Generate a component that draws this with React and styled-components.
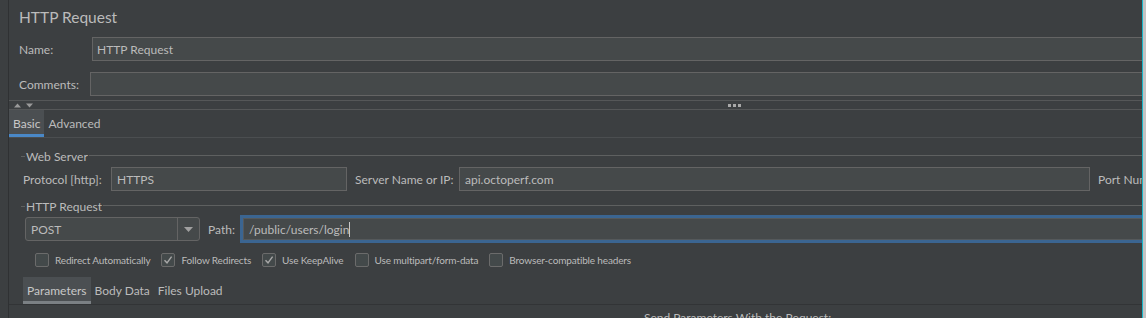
import React from "react";
import styled, { createGlobalStyle } from "styled-components";

const GlobalStyle = createGlobalStyle`
  body {
    margin: 0;
    background: #3c3f41;
    font-family: Lato, "Liberation Sans", sans-serif;
    color: #bbbbbb;
  }
`;

const Frame = styled.div`
  display: flex;
  width: 1146px;
  height: 318px;
  overflow: hidden;
  background: #3c3f41;
`;

const Gutter = styled.div`
  width: 8px;
  border-right: 1px solid #2f3133;
`;

const Main = styled.div`
  flex: 1;
  min-width: 0;
  overflow: hidden;
  display: flex;
  flex-direction: column;

  & > * {
    flex: none;
  }
`;

const RightEdge = styled.div`
  width: 3px;
  border-left: 1px solid #19b6c9;
  background: #c3c3c3;
`;

const Title = styled.div`
  height: 34px;
  line-height: 34px;
  padding-left: 10px;
  font-size: 15.5px;
  color: #bbbbbb;
`;

const FormRow = styled.div`
  display: flex;
  align-items: center;
  height: 24px;
  padding-left: 10px;
  margin-top: ${(p) => p.$top || 0}px;
`;

const Label = styled.span`
  flex: none;
  width: ${(p) => (p.$width ? `${p.$width}px` : "auto")};
  font-size: 12px;
  white-space: nowrap;
  color: #bbbbbb;
`;

const TextInput = styled.div`
  flex: ${(p) => (p.$width ? "none" : "1")};
  width: ${(p) => (p.$width ? `${p.$width}px` : "auto")};
  height: 24px;
  box-sizing: border-box;
  margin-right: ${(p) => (p.$width ? 0 : -20)}px;
  background: #45494a;
  border: 1px solid #646464;
  display: flex;
  align-items: center;
  padding-left: ${(p) => p.$pad || 5}px;
  font-size: 12px;
  color: #bbbbbb;
  white-space: nowrap;
`;

const Splitter = styled.div`
  margin-top: 4px;
  height: 8px;
  border-top: 1px solid #555758;
  border-bottom: 1px solid #555758;
  display: flex;
  align-items: center;
`;

const Arrows = styled.div`
  display: flex;
  gap: 5px;
  padding-left: 5px;
`;

const Dots = styled.div`
  display: flex;
  gap: 2px;
  margin-left: 695px;
  span {
    width: 3px;
    height: 3px;
    background: #a9a9a9;
  }
`;

const TabBar = styled.div`
  display: flex;
  height: 27px;
  padding-left: ${(p) => p.$indent || 0}px;
  border-bottom: 1px solid ${(p) => p.$line || "#4b4e50"};
  margin-top: ${(p) => p.$top || 0}px;
`;

const Tab = styled.div`
  display: flex;
  align-items: center;
  padding: 0 4px;
  box-sizing: border-box;
  font-size: 12px;
  color: ${(p) => (p.$active ? "#c8c8c8" : "#bbbbbb")};
  background: ${(p) => (p.$active ? "#4b4f52" : "transparent")};
  border-bottom: 3px solid
    ${(p) => (p.$active ? p.$accent : "transparent")};
  padding-top: 3px;
`;

const Group = styled.div`
  padding-left: 12px;
  margin-top: ${(p) => p.$top || 0}px;
`;

const GroupHeader = styled.div`
  display: flex;
  align-items: center;
  height: 14px;
  &::before {
    content: "";
    width: 4px;
    height: 1px;
    background: #5e6060;
  }
  &::after {
    content: "";
    flex: 1;
    height: 1px;
    background: #5e6060;
    margin-top: -1px;
  }
`;

const GroupTitle = styled.span`
  font-size: 12px;
  padding: 0 1px;
  color: #bbbbbb;
`;

const FieldRow = styled.div`
  display: flex;
  align-items: center;
  height: ${(p) => p.$height || 24}px;
  padding-left: ${(p) => p.$indent || 0}px;
  margin-top: ${(p) => p.$top || 0}px;
  gap: 8px;
  white-space: nowrap;
`;

const Combo = styled.div`
  flex: none;
  width: 175px;
  height: 24px;
  box-sizing: border-box;
  display: flex;
  background: #45494a;
  border: 1px solid #646464;
  border-radius: 3px;
  font-size: 12px;
`;

const ComboValue = styled.div`
  flex: 1;
  display: flex;
  align-items: center;
  padding-left: 5px;
`;

const ComboButton = styled.div`
  width: 21px;
  border-left: 1px solid #646464;
  display: flex;
  align-items: center;
  justify-content: center;
`;

const FocusInput = styled.div`
  flex: 1;
  height: 28px;
  box-sizing: border-box;
  margin-right: -20px;
  background: #45494a;
  border: 3px solid #3b6591;
  box-shadow: inset 0 0 0 1px #55595b;
  display: flex;
  align-items: center;
  padding-left: 6px;
  font-size: 12px;
  color: #bbbbbb;
`;

const Caret = styled.span`
  width: 1px;
  height: 15px;
  background: #c8c8c8;
`;

const CheckRow = styled.div`
  display: flex;
  align-items: center;
  height: 14px;
  padding-left: 14px;
  margin-top: 10px;
  gap: 11px;
`;

const CheckItem = styled.label`
  display: flex;
  align-items: center;
  gap: 6px;
  font-size: 10px;
  letter-spacing: -0.15px;
  color: #bbbbbb;
  white-space: nowrap;
`;

const Box = styled.span`
  width: 14px;
  height: 14px;
  box-sizing: border-box;
  border: 1px solid #6b6b6b;
  border-radius: 2px;
  background: #43494a;
  display: flex;
  align-items: center;
  justify-content: center;
`;

const Footer = styled.div`
  margin-top: 5px;
  padding-left: 635px;
  font-size: 12px;
  line-height: 15px;
  white-space: nowrap;
  color: #bbbbbb;
`;

const Check = ({ checked, children }) => (
  <CheckItem>
    <Box>
      {checked && (
        <svg width="10" height="10" viewBox="0 0 10 10">
          <path d="M1.5 5.2 L4 7.8 L8.6 1.6" fill="none" stroke="#a8a8a8" strokeWidth="1.4" />
        </svg>
      )}
    </Box>
    {children}
  </CheckItem>
);

export default function App() {
  return (
    <>
      <GlobalStyle />
      <Frame>
        <Gutter />
        <Main>
          <Title>HTTP Request</Title>

          <FormRow $top={3}>
            <Label $width={73}>Name:</Label>
            <TextInput $pad={4}>HTTP Request</TextInput>
          </FormRow>
          <FormRow $top={11}>
            <Label $width={71}>Comments:</Label>
            <TextInput />
          </FormRow>

          <Splitter>
            <Arrows>
              <svg width="7" height="5" viewBox="0 0 7 5">
                <path d="M0 4.5 L3.5 0.5 L7 4.5 Z" fill="#9a9a9a" />
              </svg>
              <svg width="7" height="5" viewBox="0 0 7 5">
                <path d="M0 0.5 L3.5 4.5 L7 0.5 Z" fill="#9a9a9a" />
              </svg>
            </Arrows>
            <Dots>
              <span />
              <span />
              <span />
            </Dots>
          </Splitter>

          <TabBar $line="#4b4e50">
            <Tab $active $accent="#4a88c7">Basic</Tab>
            <Tab>Advanced</Tab>
          </TabBar>

          <Group $top={11}>
            <GroupHeader>
              <GroupTitle>Web Server</GroupTitle>
            </GroupHeader>
            <FieldRow $top={4} $indent={2}>
              <Label $width={80}>Protocol [http]:</Label>
              <TextInput $width={236}>HTTPS</TextInput>
              <Label $width={96}>Server Name or IP:</Label>
              <TextInput $width={631}>api.octoperf.com</TextInput>
              <Label>Port Number:</Label>
              <TextInput $width={80} />
            </FieldRow>
          </Group>

          <Group $top={8}>
            <GroupHeader>
              <GroupTitle>HTTP Request</GroupTitle>
            </GroupHeader>
            <FieldRow $top={2} $indent={4} $height={28}>
              <Combo>
                <ComboValue>POST</ComboValue>
                <ComboButton>
                  <svg width="9" height="5" viewBox="0 0 9 5">
                    <path d="M0 0 L9 0 L4.5 5 Z" fill="#a0a0a0" />
                  </svg>
                </ComboButton>
              </Combo>
              <Label $width={24}>Path:</Label>
              <FocusInput>
                /public/users/login
                <Caret />
              </FocusInput>
            </FieldRow>
            <CheckRow>
              <Check>Redirect Automatically</Check>
              <Check checked>Follow Redirects</Check>
              <Check checked>Use KeepAlive</Check>
              <Check>Use multipart/form-data</Check>
              <Check>Browser-compatible headers</Check>
            </CheckRow>
          </Group>

          <TabBar $top={10} $indent={14} $line="#323436">
            <Tab $active $accent="#7b8084">Parameters</Tab>
            <Tab>Body Data</Tab>
            <Tab>Files Upload</Tab>
          </TabBar>

          <Footer>Send Parameters With the Request:</Footer>
        </Main>
        <RightEdge />
      </Frame>
    </>
  );
}
